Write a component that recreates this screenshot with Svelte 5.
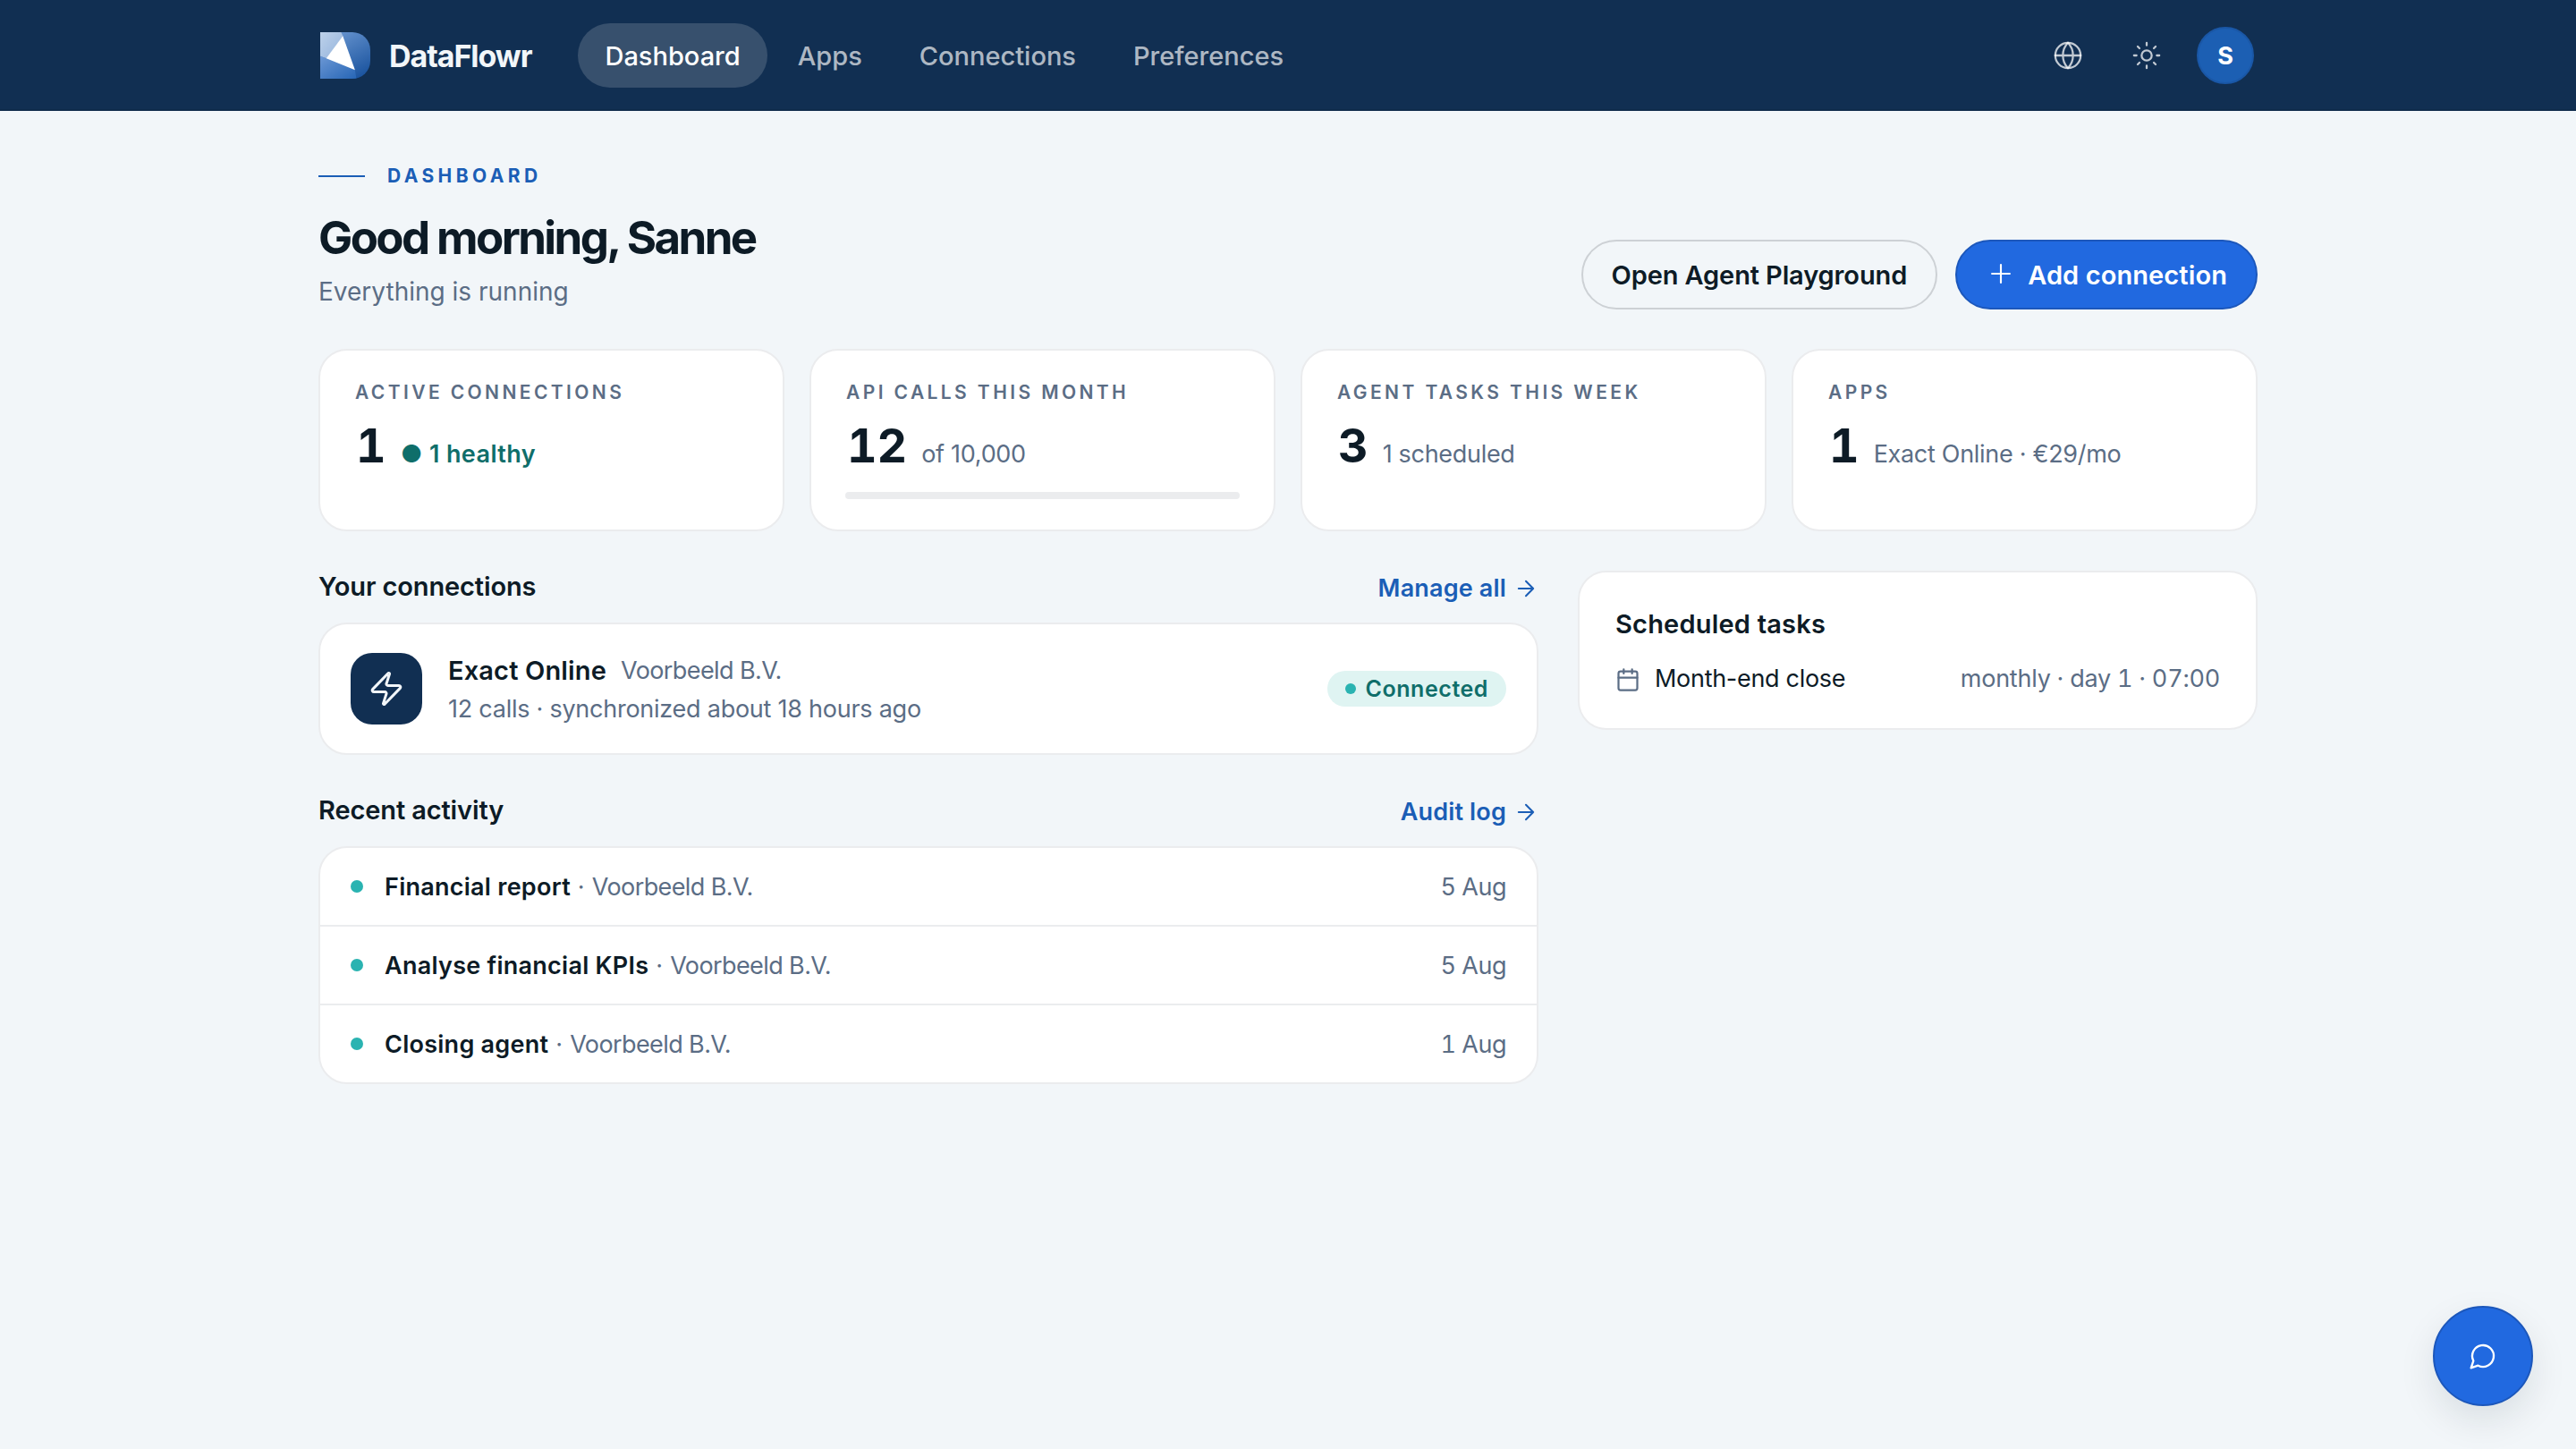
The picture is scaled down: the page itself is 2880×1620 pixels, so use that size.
<script>
	const navItems = ['Dashboard', 'Apps', 'Connections', 'Preferences'];

	const stats = [
		{ label: 'Active connections', value: '1', note: '● 1 healthy', healthy: true },
		{ label: 'API calls this month', value: '12', note: 'of 10,000', used: 0 },
		{ label: 'Agent tasks this week', value: '3', note: '1 scheduled' },
		{ label: 'Apps', value: '1', note: 'Exact Online · €29/mo' }
	];

	const activity = [
		{ title: 'Financial report', company: 'Voorbeeld B.V.', date: '5 Aug' },
		{ title: 'Analyse financial KPIs', company: 'Voorbeeld B.V.', date: '5 Aug' },
		{ title: 'Closing agent', company: 'Voorbeeld B.V.', date: '1 Aug' }
	];

	let current = $state('Dashboard');
</script>

<div class="page">
	<header class="topbar">
		<div class="container topbarInner">
			<a class="brand" href="#home">
				<svg class="logo" viewBox="0 0 56 52" aria-hidden="true">
					<defs>
						<linearGradient id="logoBase" x1="0.3" y1="0" x2="0.9" y2="1">
							<stop offset="0" stop-color="#6794cf" />
							<stop offset="1" stop-color="#16509c" />
						</linearGradient>
						<linearGradient id="logoLight" x1="0" y1="0" x2="1" y2="1">
							<stop offset="0" stop-color="#bdd1ea" />
							<stop offset="1" stop-color="#93b3dc" />
						</linearGradient>
						<linearGradient id="logoLow" x1="0" y1="0" x2="1" y2="1">
							<stop offset="0" stop-color="#6b97d4" />
							<stop offset="1" stop-color="#2766b6" />
						</linearGradient>
					</defs>
					<path d="M0 0H36A20 20 0 0 1 56 20V32A20 20 0 0 1 36 52H0Z" fill="url(#logoBase)" />
					<path d="M0 0H23.300L25.500 4.500L7 29.300L0 26.700Z" fill="url(#logoLight)" />
					<path d="M0 26.700L38.700 42L40.400 51.500L36 52H0Z" fill="url(#logoLow)" />
					<path d="M25.300 4.300L38.900 42.200L6.700 29.300Z" fill="#fff" />
				</svg>
				<span>DataFlowr</span>
			</a>
			<nav>
				{#each navItems as item}
					<button class="navItem" class:active={item === current} onclick={() => (current = item)}>{item}</button>
				{/each}
			</nav>
			<div class="tools">
				<button class="iconButton" aria-label="Language">
					<svg class="icon" viewBox="0 0 24 24"><circle cx="12" cy="12" r="10" /><path d="M12 2a14.500 14.500 0 0 0 0 20 14.500 14.500 0 0 0 0-20M2 12h20" /></svg>
				</button>
				<button class="iconButton" aria-label="Theme">
					<svg class="icon" viewBox="0 0 24 24"><circle cx="12" cy="12" r="4" /><path d="M12 2v2M12 20v2M4.930 4.930l1.410 1.410M17.660 17.660l1.410 1.410M2 12h2M20 12h2M6.340 17.660l-1.410 1.410M19.070 4.930l-1.410 1.410" /></svg>
				</button>
				<button class="avatar">S</button>
			</div>
		</div>
	</header>

	<main class="container">
		<div class="hero">
			<div>
				<div class="eyebrow">Dashboard</div>
				<h1>Good morning, Sanne</h1>
				<p class="subtitle">Everything is running</p>
			</div>
			<div class="actions">
				<button class="button">Open Agent Playground</button>
				<button class="button primary">
					<svg class="icon" viewBox="0 0 24 24"><path d="M5 12h14M12 5v14" /></svg>
					<span>Add connection</span>
				</button>
			</div>
		</div>

		<div class="stats">
			{#each stats as stat}
				<div class="card stat">
					<div class="statLabel">{stat.label}</div>
					<div class="statRow">
						<span class="statValue">{stat.value}</span>
						<span class="statNote" class:healthy={stat.healthy}>{stat.note}</span>
					</div>
					{#if stat.used !== undefined}
						<div class="track"><div class="fill" style="width: {stat.used}%"></div></div>
					{/if}
				</div>
			{/each}
		</div>

		<div class="columns">
			<div class="mainColumn">
				<section>
					<div class="sectionHead">
						<h2>Your connections</h2>
						<a href="#connections">Manage all
							<svg class="arrow" viewBox="0 0 24 24"><path d="M5 12h14M12 5l7 7-7 7" /></svg>
						</a>
					</div>
					<div class="card connection">
						<div class="tile">
							<svg viewBox="0 0 24 24"><path d="M4 14a1 1 0 0 1-.780-1.630l9.900-10.200a.5.5 0 0 1 .860.460l-1.920 6.020A1 1 0 0 0 13 10h7a1 1 0 0 1 .780 1.630l-9.900 10.200a.5.5 0 0 1-.860-.460l1.920-6.020A1 1 0 0 0 11 14z" /></svg>
						</div>
						<div class="connectionText">
							<div class="connectionTitle"><strong>Exact Online</strong><span class="company">Voorbeeld B.V.</span></div>
							<div class="connectionMeta">12 calls · synchronized about 18 hours ago</div>
						</div>
						<span class="badge"><i></i>Connected</span>
					</div>
				</section>

				<section>
					<div class="sectionHead">
						<h2>Recent activity</h2>
						<a href="#audit">Audit log
							<svg class="arrow" viewBox="0 0 24 24"><path d="M5 12h14M12 5l7 7-7 7" /></svg>
						</a>
					</div>
					<div class="card">
						{#each activity as item}
							<div class="activityRow">
								<i></i>
								<div class="activityText"><strong>{item.title}</strong> · <span class="company">{item.company}</span></div>
								<time>{item.date}</time>
							</div>
						{/each}
					</div>
				</section>
			</div>

			<aside class="card scheduled">
				<h2>Scheduled tasks</h2>
				<div class="task">
					<svg class="calendar" viewBox="0 0 24 24"><path d="M8 2v4M16 2v4M3 10h18" /><rect x="3" y="4" width="18" height="18" rx="2" /></svg>
					<span class="taskName">Month-end close</span>
					<span class="taskTime">monthly · day 1 · 07:00</span>
				</div>
			</aside>
		</div>
	</main>

	<button class="chat" aria-label="Chat">
		<svg viewBox="0 0 24 24"><path d="M7.900 20A9 9 0 1 0 4 16.100L2 22Z" /></svg>
	</button>
</div>

<style>
	:global(body) {
		background: #f2f6f9;
	}

	.page {
		min-height: 1620px;
		box-sizing: border-box;
		font-family: Inter, sans-serif;
		font-size: 27px;
		color: #0d1b26;
	}

	.page :global(*) {
		box-sizing: border-box;
	}

	.container {
		width: 2168px;
		margin: 0 auto;
	}

	button {
		font: inherit;
		color: inherit;
		background: none;
		border: 0;
		padding: 0;
		cursor: pointer;
	}

	a {
		text-decoration: none;
	}

	svg {
		display: block;
		flex: none;
		fill: none;
		stroke: currentColor;
		stroke-width: 1.5;
		stroke-linecap: round;
		stroke-linejoin: round;
	}

	h1,
	h2,
	p {
		margin: 0;
	}

	.icon {
		width: 34px;
		height: 34px;
	}

	.topbar {
		height: 124px;
		background: #112f52;
		border-bottom: 2px solid #0f2b4b;
	}

	.topbarInner {
		display: flex;
		align-items: center;
		height: 124px;
	}

	.brand {
		display: flex;
		align-items: center;
		gap: 21px;
		padding-left: 2px;
		margin-right: 52px;
		font-size: 34px;
		font-weight: 700;
		letter-spacing: -0.031em;
		color: #f2f6f9;
	}

	.logo {
		width: 56px;
		height: 52px;
		stroke: none;
	}

	nav {
		display: flex;
		gap: 4px;
	}

	.navItem {
		height: 72px;
		padding: 0 30px;
		border-radius: 36px;
		font-size: 29px;
		font-weight: 500;
		color: rgba(255, 255, 255, 0.68);
	}

	.navItem.active {
		background: rgba(255, 255, 255, 0.16);
		color: #fff;
	}

	.tools {
		display: flex;
		align-items: center;
		gap: 16px;
		margin-left: auto;
		padding-right: 4px;
		color: rgba(255, 255, 255, 0.74);
	}

	.tools .icon {
		stroke-width: 1.6;
	}

	.iconButton {
		display: grid;
		place-items: center;
		width: 72px;
		height: 72px;
	}

	.avatar {
		width: 64px;
		height: 64px;
		margin-left: 4px;
		border: 2px solid #1a57a6;
		border-radius: 50%;
		background: #1c5fb3;
		font-size: 27px;
		font-weight: 700;
		color: #fff;
	}

	main {
		padding-top: 57px;
	}

	.hero {
		display: flex;
		justify-content: space-between;
		align-items: flex-end;
		margin-bottom: 44px;
	}

	.eyebrow {
		display: flex;
		align-items: center;
		gap: 25px;
		margin-bottom: 23px;
		font-size: 21px;
		font-weight: 700;
		line-height: 32px;
		letter-spacing: 0.21em;
		text-transform: uppercase;
		color: #1b5eb6;
	}

	.eyebrow::before {
		content: '';
		width: 52px;
		height: 2px;
		background: #1b5eb6;
	}

	h1 {
		font-size: 51px;
		font-weight: 700;
		line-height: 60px;
		letter-spacing: -0.051em;
	}

	.subtitle {
		margin-top: 10px;
		font-size: 28px;
		line-height: 40px;
		color: #5b6d85;
	}

	.actions {
		display: flex;
		gap: 20px;
	}

	.button {
		display: flex;
		align-items: center;
		gap: 13px;
		height: 78px;
		padding: 0 32px;
		border: 2px solid #cdd1d5;
		border-radius: 39px;
		font-size: 29px;
		font-weight: 600;
		letter-spacing: -0.12px;
	}

	.button.primary {
		border-color: #1c57bb;
		background: #2169e0;
		letter-spacing: 0.1px;
		color: #fff;
	}

	.button .icon {
		margin-bottom: 2px;
	}

	.card {
		background: #fff;
		border: 2px solid #ebecee;
		border-radius: 32px;
	}

	.stats {
		display: grid;
		grid-template-columns: repeat(4, 1fr);
		gap: 28px;
		margin-bottom: 44px;
	}

	.stat {
		height: 204px;
		padding: 34px 38px;
	}

	.statLabel {
		font-size: 21px;
		font-weight: 600;
		line-height: 26px;
		letter-spacing: 0.162em;
		text-indent: 1px;
		text-transform: uppercase;
		color: #5b6d85;
	}

	.statRow {
		display: flex;
		align-items: baseline;
		gap: 16px;
		height: 64px;
		margin-top: 15px;
	}

	.statValue {
		padding-left: 2px;
		font-size: 52px;
		font-weight: 700;
		line-height: 64px;
		font-variant-numeric: tabular-nums;
	}

	.statNote {
		line-height: 36px;
		letter-spacing: -0.3px;
		color: #5b6d85;
	}

	.statNote.healthy {
		font-weight: 600;
		letter-spacing: 0.4px;
		color: #0f6e6a;
	}

	.track {
		height: 8px;
		margin-top: 19px;
		border-radius: 4px;
		background: #ebecee;
		overflow: hidden;
	}

	.fill {
		height: 100%;
		background: #2169e0;
	}

	.columns {
		display: grid;
		grid-template-columns: 1364fr 760fr;
		gap: 44px;
		align-items: start;
	}

	.mainColumn {
		display: grid;
		gap: 44px;
	}

	.sectionHead {
		display: flex;
		justify-content: space-between;
		align-items: center;
		height: 36px;
		margin-bottom: 22px;
		line-height: 36px;
	}

	h2 {
		font-size: 29px;
		font-weight: 600;
		letter-spacing: -0.12px;
	}

	.sectionHead a {
		display: flex;
		align-items: center;
		gap: 8px;
		margin-top: 3px;
		font-weight: 600;
		letter-spacing: 0.17px;
		color: #1b5eb6;
	}

	.arrow {
		width: 28px;
		height: 28px;
		stroke-width: 1.75;
	}

	.connection {
		display: flex;
		align-items: center;
		gap: 28px;
		padding: 32px 34px;
	}

	.tile {
		display: grid;
		place-items: center;
		width: 80px;
		height: 80px;
		border-radius: 24px;
		background: #112f52;
		color: #f2f6f9;
	}

	.tile svg {
		width: 42px;
		height: 42px;
		stroke-width: 1.75;
	}

	.connectionText {
		flex: 1;
		padding-left: 1px;
	}

	.company {
		letter-spacing: -0.6px;
		color: #5b6d85;
	}

	.connectionTitle {
		display: flex;
		align-items: center;
		gap: 16px;
		margin: 1px 0 7px;
		line-height: 37px;
	}

	.connectionTitle strong {
		font-size: 29px;
		font-weight: 600;
		letter-spacing: 0.15px;
	}

	.connectionMeta {
		line-height: 35px;
		letter-spacing: -0.25px;
		color: #5b6d85;
	}

	.badge {
		display: flex;
		align-items: center;
		gap: 11px;
		height: 40px;
		padding: 0 20px;
		border-radius: 20px;
		background: #dff4f2;
		font-size: 25px;
		font-weight: 600;
		letter-spacing: 0.55px;
		color: #0f6e6a;
	}

	.badge i {
		width: 12px;
		height: 12px;
		border-radius: 50%;
		background: #2ab3b1;
	}

	.activityRow {
		display: flex;
		align-items: center;
		gap: 24px;
		height: 86px;
		padding: 0 34px;
	}

	.activityRow + .activityRow {
		height: 88px;
		border-top: 2px solid #ebecee;
	}

	.activityRow i {
		width: 14px;
		height: 14px;
		border-radius: 50%;
		background: #2ab3b1;
	}

	.activityText {
		flex: 1;
		letter-spacing: 0.3px;
		color: #5b6d85;
	}

	.activityText strong {
		font-weight: 600;
		letter-spacing: 0.26px;
		color: #0d1b26;
	}

	time {
		font-variant-numeric: tabular-nums;
		letter-spacing: -0.5px;
		color: #5b6d85;
	}

	.scheduled {
		padding: 38px 40px 37px;
	}

	.scheduled h2 {
		margin-bottom: 23px;
		line-height: 40px;
		letter-spacing: 0.2px;
	}

	.task {
		display: flex;
		align-items: center;
		height: 36px;
		line-height: 36px;
	}

	.calendar {
		width: 28px;
		height: 28px;
		margin: 1px 16px 0 0;
		stroke-width: 1.9;
		color: #5b6d85;
	}

	.taskName {
		letter-spacing: -0.3px;
	}

	.taskTime {
		margin-left: auto;
		font-variant-numeric: tabular-nums;
		letter-spacing: -0.23px;
		color: #5b6d85;
	}

	/* floats over the page in the bottom corner */
	.chat {
		position: fixed;
		right: 48px;
		bottom: 48px;
		display: grid;
		place-items: center;
		width: 112px;
		height: 112px;
		border: 2px solid #1c57bb;
		border-radius: 50%;
		background: #2169e0;
		color: #fff;
		box-shadow: 0 16px 40px rgba(13, 27, 38, 0.1);
	}

	.chat svg {
		width: 32px;
		height: 32px;
		stroke-width: 1.75;
	}
</style>
